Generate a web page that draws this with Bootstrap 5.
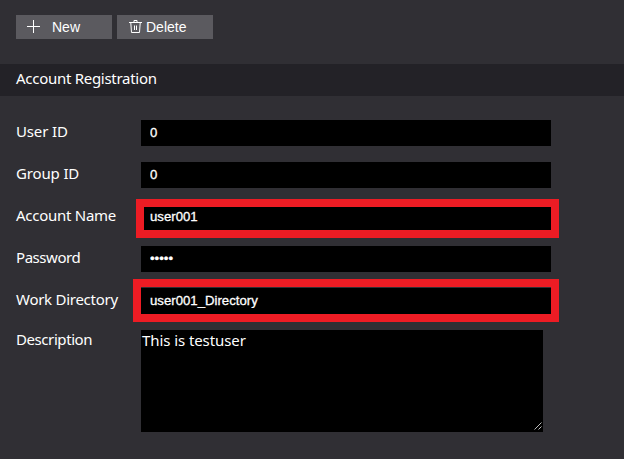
<!DOCTYPE html>
<html lang="en">
<head>
<meta charset="utf-8">
<meta name="viewport" content="width=device-width, initial-scale=1">
<title>Account Registration</title>
<link href="https://cdn.jsdelivr.net/npm/bootstrap@5.3.0/dist/css/bootstrap.min.css" rel="stylesheet">
<style>
body{background:#302f34;color:#fff;font:15px/20px "Noto Sans",sans-serif;overflow:hidden;height:459px}
.toolbar-row{padding:15px 16px 0;height:64px;gap:5px}
.tool-btn{--bs-btn-color:#fff;--bs-btn-bg:#5b5a5f;--bs-btn-hover-color:#fff;--bs-btn-hover-bg:#6a696e;width:96px;height:24px;font:14px/24px "Liberation Sans",sans-serif}
.section-bar{height:32px;padding:4px 16px 8px;background:#232227;letter-spacing:-.28px}
.form-area{padding:24px 16px 0}
.field-row{height:26px;margin-bottom:16px}
.field-label{width:125px;white-space:nowrap;line-height:22px;letter-spacing:-.27px}
.short-label{letter-spacing:-.15px}
.tight-label{letter-spacing:-.45px}
.desc-label{line-height:18px;letter-spacing:-.42px}
.field-wrap{width:410px}
.form-control.dark-field,.form-control.dark-field:focus{background:#000;color:#fff;box-shadow:none}
input.form-control.dark-field{height:26px;padding:0 9px 2px;font:13.2px/24px "Liberation Sans",sans-serif;-webkit-text-stroke:.3px #fff}
.form-control.desc-field{width:402px;height:102px;min-height:0;padding:0 1px;font:15px/20px "Noto Sans",sans-serif;letter-spacing:-.08px;resize:none}
.mark-frame{position:absolute;border:8px solid #ed1c24;pointer-events:none}
.frame-name{left:-5px;top:-5px;width:423px;height:39px}
.frame-dir{left:-8px;top:-9px;width:426px;height:43px}
.frame-dir::before{content:"";display:block;height:1px;background:#302f34}
.grip{position:absolute;left:393px;top:92px}
</style>
</head>
<body>
<div class="toolbar-row d-flex">
  <button class="btn tool-btn rounded-0 border-0 p-0 d-flex align-items-center" type="button"><svg class="ms-2" width="28" height="24" fill="none" stroke="#fff" shape-rendering="crispEdges"><path d="M3 11.5H16M9.500 5V18"/></svg>New</button>
  <button class="btn tool-btn rounded-0 border-0 p-0 d-flex align-items-center" type="button"><svg class="ms-2" width="21" height="24" fill="none" stroke="#fff"><path d="M4 7.500H17M9 7V5.500H12V7M5.800 8L6.500 17.500H14.500L15.200 8M9.500 10.500V15M11.500 10.500V15"/></svg>Delete</button>
</div>
<div class="section-bar">Account Registration</div>
<form class="form-area">
  <div class="field-row d-flex"><label class="field-label short-label" for="uid">User ID</label><div class="field-wrap"><input class="form-control dark-field rounded-0 border-0" id="uid" value="0"></div></div>
  <div class="field-row d-flex"><label class="field-label short-label" for="gid">Group ID</label><div class="field-wrap"><input class="form-control dark-field rounded-0 border-0" id="gid" value="0"></div></div>
  <div class="field-row d-flex"><label class="field-label" for="acc">Account Name</label><div class="field-wrap position-relative"><input class="form-control dark-field rounded-0 border-0" id="acc" value="user001"><div class="mark-frame frame-name"></div></div></div>
  <div class="field-row d-flex"><label class="field-label tight-label" for="pwd">Password</label><div class="field-wrap"><input type="password" class="form-control dark-field rounded-0 border-0" id="pwd" value="users"></div></div>
  <div class="field-row d-flex"><label class="field-label" for="dir">Work Directory</label><div class="field-wrap position-relative"><input class="form-control dark-field rounded-0 border-0" id="dir" value="user001_Directory"><div class="mark-frame frame-dir"></div></div></div>
  <div class="d-flex"><label class="field-label desc-label" for="desc">Description</label><div class="field-wrap position-relative"><textarea class="form-control dark-field desc-field rounded-0 border-0" id="desc">This is testuser</textarea><svg class="grip" width="8" height="8" stroke="#bbb" fill="none"><path d="M.5 7.500L7.500 .5M4.500 7.500L7.500 4.500"/></svg></div></div>
</form>
<script src="https://cdn.jsdelivr.net/npm/bootstrap@5.3.0/dist/js/bootstrap.bundle.min.js"></script>
</body>
</html>
